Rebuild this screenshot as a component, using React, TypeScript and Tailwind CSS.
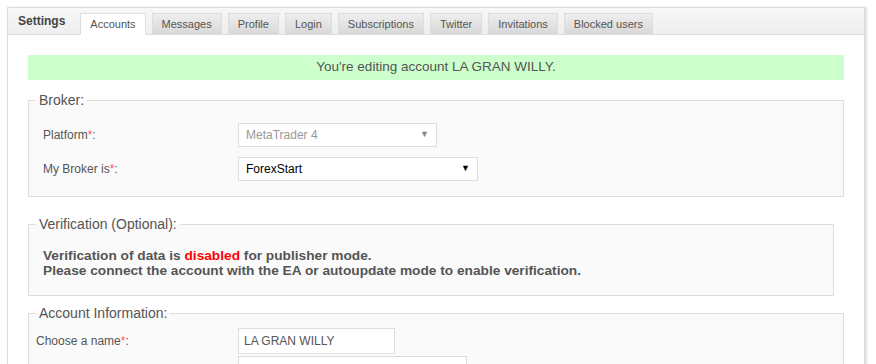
export default function App() {
  const tabs = ['Accounts', 'Messages', 'Profile', 'Login', 'Subscriptions', 'Twitter', 'Invitations', 'Blocked users'];
  const font = { fontFamily: 'Tahoma, "Liberation Sans", sans-serif' };

  return (
    <div className="w-[876px] h-[364px] bg-white overflow-hidden pt-[7px] pl-[7px]" style={font}>
      <div className="w-[858px] h-[400px] border border-[#dddddd] shadow-[2px_0_2px_rgba(0,0,0,0.12)] bg-white">
        {/* Tab bar */}
        <div className="h-[27px] flex items-end bg-gradient-to-b from-[#f7f7f7] to-[#eeeeee] border-b border-[#dddddd] pl-[10px]">
          <div className="h-[26px] flex items-center pr-[14px] text-[12px] font-bold text-[#444] mr-[1px]">Settings</div>
          <div className="flex gap-[6px] -mb-px">
            {tabs.map((t, i) => (
              <div
                key={t}
                className={
                  i === 0
                    ? 'h-[22px] px-[9px] flex items-center text-[11px] text-[#555] bg-white border border-[#dddddd] border-b-white'
                    : 'h-[22px] px-[9px] flex items-center text-[11px] text-[#555] bg-gradient-to-b from-[#eeeeee] to-[#d8d8d8] border border-[#dddddd] border-b-[#dddddd]'
                }
              >
                {t}
              </div>
            ))}
          </div>
        </div>

        <div className="pl-[20px] pr-[14px] pt-[20px]">
          <div className="w-[816px] h-[25px] bg-[#ccffcc] flex items-center justify-center text-[13.5px] text-[#555]">
            You're editing account LA GRAN WILLY.
          </div>

          <fieldset className="mt-[10px] w-[816px] border border-[#dddddd] bg-[#fafafa] pl-[14px] pb-[15px] pt-[2px]">
            <legend className="px-[3px] -ml-[7px] text-[14px] text-[#555]">Broker:</legend>
            <div className="flex items-center h-[24px] mt-[10px]">
              <div className="w-[195px] text-[12px] text-[#555]">Platform<span className="text-[#ff5555]">*</span>:</div>
              <div className="w-[199px] h-[24px] border border-[#dddddd] bg-white flex items-center justify-between px-[7px] text-[12px] text-[#999]">
                <span>MetaTrader 4</span>
                <span className="text-[9px] text-[#888]">▼</span>
              </div>
            </div>
            <div className="flex items-center h-[24px] mt-[10px]">
              <div className="w-[195px] text-[12px] text-[#555]">My Broker is<span className="text-[#ff5555]">*</span>:</div>
              <div className="w-[240px] h-[24px] border border-[#dddddd] bg-white flex items-center justify-between px-[7px] text-[12px] text-black">
                <span>ForexStart</span>
                <span className="text-[9px]">▼</span>
              </div>
            </div>
          </fieldset>

          <fieldset className="mt-[17px] w-[806px] border border-[#dddddd] bg-[#fafafa] pl-[14px] pb-[17px] pt-[13px]">
            <legend className="px-[3px] -ml-[7px] text-[14px] text-[#555]">Verification (Optional):</legend>
            <div className="text-[13.7px] font-bold text-[#555] leading-[15px]">
              Verification of data is <span className="text-[#ff0000]">disabled</span> for publisher mode.
              <br />
              Please connect the account with the EA or autoupdate mode to enable verification.
            </div>
          </fieldset>

          <fieldset className="mt-[7px] w-[816px] border border-[#dddddd] bg-[#fafafa] pl-[7px] pb-[14px] pt-[4px]">
            <legend className="px-[3px] ml-0 text-[14px] text-[#555]">Account Information:</legend>
            <div className="flex items-center h-[26px]">
              <div className="w-[202px] text-[12px] text-[#555]">Choose a name<span className="text-[#ff5555]">*</span>:</div>
              <div className="w-[157px] h-[26px] border border-[#dddddd] bg-white flex items-center px-[5px] text-[12px] text-[#555]">
                LA GRAN WILLY
              </div>
            </div>
            <div className="flex items-center h-[26px] mt-[2px]">
              <div className="w-[202px]"></div>
              <div className="w-[229px] h-[26px] border border-[#dddddd] bg-white"></div>
            </div>
          </fieldset>
        </div>
      </div>
    </div>
  );
}
